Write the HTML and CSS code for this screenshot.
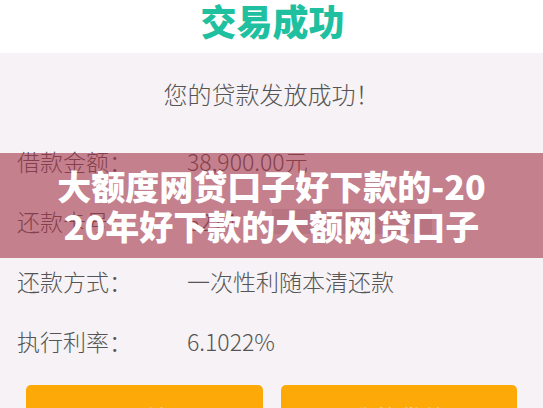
FILE: index.html
```html
<!DOCTYPE html>
<html lang="zh-CN">
<head>
  <meta charset="UTF-8" />
  <title>交易成功</title>
  <link rel="stylesheet" href="styles.css">
</head>
<body>
  <div class="page">
    <header class="top">
      <h1>交易成功</h1>
    </header>

    <main class="content">
      <p class="notice">您的贷款发放成功！</p>

      <div class="rows">
        <div class="row">
          <span class="label">借款金额：</span>
          <span class="value">38,900.00元</span>
        </div>
        <div class="row">
          <span class="label">还款卡号：</span>
          <span class="value">6214<span class="mask"></span></span>
        </div>
        <div class="row">
          <span class="label">还款方式：</span>
          <span class="value">一次性利随本清还款</span>
        </div>
        <div class="row">
          <span class="label">执行利率：</span>
          <span class="value">6.1022%</span>
        </div>
      </div>

      <div class="actions">
        <button class="btn">返回首页</button>
        <button class="btn">我的贷款</button>
      </div>
    </main>

    <div class="banner">
      <p>大额度网贷口子好下款的-20<br>20年好下款的大额网贷口子</p>
    </div>
  </div>
</body>
</html>
```

FILE: styles.css
```css
html,
body {
  margin: 0;
  padding: 0;
  height: 100%;
  overflow: hidden;
}

body {
  font-family: "Noto Sans CJK SC", "Noto Sans", sans-serif;
  background: #f6f2f5;
}

.page {
  position: relative;
  width: 543px;
  height: 408px;
  overflow: hidden;
}

.top {
  height: 53px;
  background: #fff;
  display: flex;
  justify-content: center;
}

.top h1 {
  margin: 0;
  padding-left: 2px;
  font-size: 36px;
  line-height: 40px;
  font-weight: 900;
  color: #1fc09f;
}

.content {
  padding-top: 24px;
}

.notice {
  margin: 0;
  text-align: center;
  font-size: 24px;
  line-height: 34px;
  font-weight: 300;
  color: #555;
}

.rows {
  margin-top: 20px;
  padding-left: 17px;
}

.row {
  height: 60px;
  display: flex;
  align-items: center;
  font-size: 23px;
  font-weight: 300;
  color: #555;
}

.label {
  width: 170px;
}

.value {
  display: flex;
  align-items: center;
}

.mask {
  display: inline-block;
  width: 160px;
  height: 25px;
  margin-left: 36px;
  background: rgba(0, 0, 0, 0.12);
}

.actions {
  display: flex;
  gap: 18px;
  padding: 0 26px;
  margin-top: 14px;
}

.btn {
  flex: 1;
  height: 50px;
  padding: 21px 0 0;
  border: none;
  border-radius: 5px;
  background: #fdaa08;
  color: #fff;
  font-family: inherit;
  font-size: 24px;
  line-height: 24px;
  display: flex;
  justify-content: center;
  align-items: flex-start;
}

/* title strip laid over the card */
.banner {
  position: absolute;
  left: 0;
  right: 0;
  top: 153px;
  height: 105px;
  background: rgba(163, 52, 72, 0.6);
  display: flex;
  align-items: center;
  justify-content: center;
}

.banner p {
  margin: 0;
  text-align: center;
  color: #fff;
  font-size: 34px;
  line-height: 40px;
  font-weight: 900;
}
```
